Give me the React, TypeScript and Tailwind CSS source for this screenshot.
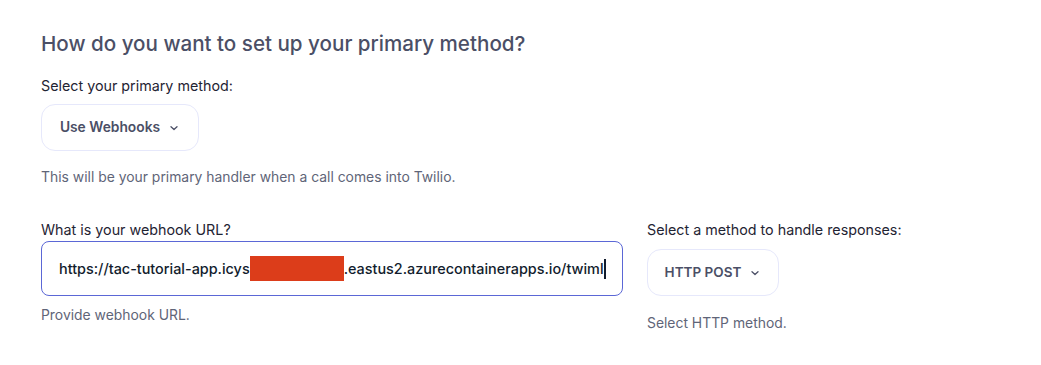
import React from "react";

function Chevron() {
  return (
    <svg width="12" height="12" viewBox="0 0 12 12" fill="none" className="ml-[8px]">
      <path d="M3 4.75L6 7.5L9 4.75" stroke="#4b4f66" strokeWidth="1.3" strokeLinecap="round" strokeLinejoin="round" />
    </svg>
  );
}

export default function App() {
  return (
    <div className="w-[1041px] h-[365px] bg-white pl-[41px] pt-[30px]" style={{ fontFamily: "Inter, 'Noto Sans', sans-serif" }}>
      <h2 className="text-[20.6px] leading-[28px] font-medium text-[#4b4f66]">How do you want to set up your primary method?</h2>
      <div className="mt-[18px] text-[14.3px] leading-[20px] text-[#1f2433]">Select your primary method:</div>
      <button className="mt-[8px] h-[47px] w-[158px] rounded-[14px] border border-[#e6e8fb] flex items-center justify-center text-[13.8px] font-semibold text-[#4b4f66]">
        Use Webhooks
        <Chevron />
      </button>
      <div className="mt-[16px] text-[13.9px] leading-[20px] text-[#5f6578]">This will be your primary handler when a call comes into Twilio.</div>
      <div className="mt-[33px] flex gap-[24px]">
        <div className="w-[582px]">
          <div className="text-[14.3px] leading-[20px] text-[#1f2433]">What is your webhook URL?</div>
          <div className="mt-[1px] h-[55px] rounded-[8px] border border-[#5b67d6] flex items-center pl-[17px] text-[14.4px] font-medium text-[#121c2d] whitespace-nowrap">
            <span>https://tac-tutorial-app.icys</span>
            <span className="inline-block w-[94px] h-[25px] bg-[#dc3d1a]"></span>
            <span>.eastus2.azurecontainerapps.io/twiml</span>
            <span className="inline-block w-[2px] h-[20px] bg-[#121c2d]"></span>
          </div>
          <div className="mt-[9px] text-[13.9px] leading-[20px] text-[#5f6578]">Provide webhook URL.</div>
        </div>
        <div>
          <div className="text-[14.3px] leading-[20px] text-[#1f2433]">Select a method to handle responses:</div>
          <button className="mt-[9px] h-[47px] w-[132px] rounded-[14px] border border-[#e6e8fb] flex items-center justify-center text-[13.5px] font-semibold text-[#4b4f66]">
            HTTP POST
            <Chevron />
          </button>
          <div className="mt-[17px] text-[13.9px] leading-[20px] text-[#5f6578]">Select HTTP method.</div>
        </div>
      </div>
    </div>
  );
}
